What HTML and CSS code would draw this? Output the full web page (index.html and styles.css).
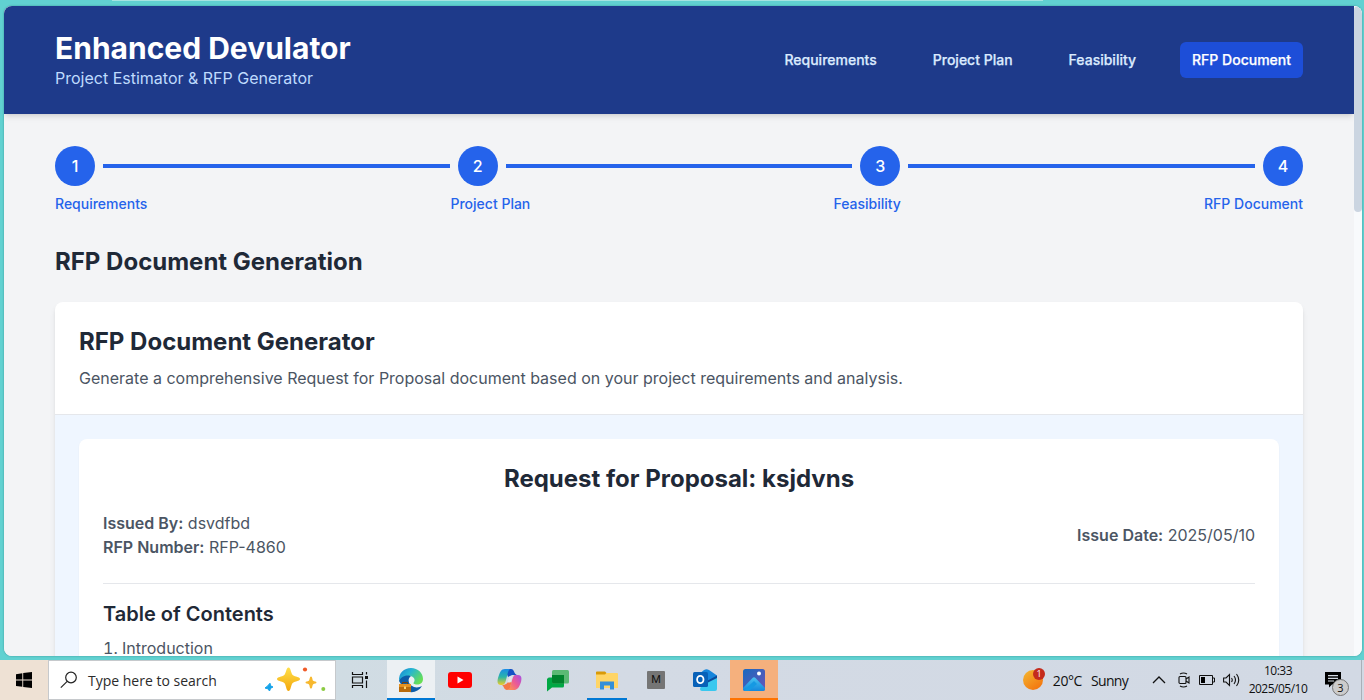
FILE: index.html
```html
<!DOCTYPE html>
<html lang="en">
<head>
<meta charset="utf-8">
<title>Enhanced Devulator</title>
<link rel="stylesheet" href="styles.css">
</head>
<body>
<div class="desktop">
  <div class="window">
    <div class="page">
      <header class="header">
        <div class="brand">
          <h1 class="brand-title">Enhanced Devulator</h1>
          <p class="brand-sub">Project Estimator &amp; RFP Generator</p>
        </div>
        <nav class="nav">
          <a class="nav-link">Requirements</a>
          <a class="nav-link">Project Plan</a>
          <a class="nav-link">Feasibility</a>
          <a class="nav-link active">RFP Document</a>
        </nav>
      </header>
      <main class="main">
        <div class="steps">
          <span class="step">1</span><span class="line"></span>
          <span class="step">2</span><span class="line"></span>
          <span class="step">3</span><span class="line"></span>
          <span class="step">4</span>
        </div>
        <div class="step-labels">
          <span>Requirements</span><span>Project Plan</span><span>Feasibility</span><span>RFP Document</span>
        </div>
        <h2 class="section-title">RFP Document Generation</h2>
        <section class="card">
          <div class="card-head">
            <h2 class="card-title">RFP Document Generator</h2>
            <p class="card-desc">Generate a comprehensive Request for Proposal document based on your project requirements and analysis.</p>
          </div>
          <div class="card-body">
            <article class="doc">
              <h2 class="doc-title">Request for Proposal: ksjdvns</h2>
              <div class="meta">
                <div>
                  <p><b>Issued By:</b> dsvdfbd</p>
                  <p><b>RFP Number:</b> RFP-4860</p>
                </div>
                <p><b>Issue Date:</b> 2025/05/10</p>
              </div>
              <h3 class="toc-title">Table of Contents</h3>
              <ol class="toc"><li>Introduction</li></ol>
            </article>
          </div>
        </section>
      </main>
    </div>
    <div class="scrollbar"><div class="thumb"></div></div>
  </div>

  <footer class="taskbar">
    <div class="start">
      <svg width="16" height="16" viewBox="0 0 16 16"><path d="M0 2.2 6.3 1.2V7.5H0ZM7.2 1.1 16 0V7.5H7.2ZM0 8.4H6.3V14.8L0 13.9ZM7.2 8.4H16V16L7.2 14.9Z"/></svg>
    </div>
    <div class="search">
      <svg width="18" height="18" viewBox="0 0 18 18" fill="none" stroke="#222" stroke-width="1.2"><circle cx="11" cy="6.5" r="5.3"/><path d="M7.2 10.4.8 16.6"/></svg>
      <span class="search-text">Type here to search</span>
      <svg class="sparkles" width="62" height="26" viewBox="0 0 62 26">
        <defs><linearGradient id="gold" x1="0" y1="0" x2="0" y2="1"><stop offset="0" stop-color="#ffe04a"/><stop offset="1" stop-color="#f3a70c"/></linearGradient></defs>
        <path fill="url(#gold)" d="M24.500 .5C27 .5 26.700 6.500 29 8.300C31 10 36 9.700 36 12C36 14.300 31 14 29 15.700C26.700 17.500 27 24 24.500 24C22 24 22.300 17.500 20 15.700C18 14 13 14.300 13 12C13 9.700 18 10 20 8.300C22.300 6.500 22 .5 24.500 .5Z"/>
        <path fill="#f7b82e" d="M47 9.500C48.500 9.500 48.200 13 49.200 13.800C50.200 14.600 52.500 14.300 52.500 15.500C52.500 16.700 50.200 16.400 49.200 17.200C48.200 18 48.500 21.500 47 21.500C45.500 21.500 45.800 18 44.800 17.200C43.800 16.400 41.500 16.700 41.500 15.500C41.500 14.300 43.800 14.600 44.800 13.800C45.800 13 45.500 9.500 47 9.500Z"/>
        <path fill="#15a3ea" stroke="#15a3ea" stroke-width="1" stroke-linejoin="round" d="M6 16.200 6.600 18.800 9 20 6.700 21.200 5.500 24 3.900 21.800 1 21 3.400 19.200Z"/>
        <circle cx="41" cy="2.500" r="2.100" fill="#f05a28"/><circle cx="59.300" cy="22" r="2" fill="#8ccb43"/>
      </svg>
    </div>
    <div class="apps">
      <div class="app task-view">
        <svg width="18" height="16" viewBox="0 0 18 16" fill="none" stroke="#111" stroke-width="1.200"><path d="M1.500 0V2.500H11.500V0M1.500 16V13.500H11.500V16M1.500 5H11.500V11H1.500ZM15.500 0V2.500M15.500 8.500V16"/><path fill="#111" stroke="none" d="M14 4H17V7H14Z"/></svg>
      </div>
      <div class="app open lit">
        <svg width="26" height="26" viewBox="0 0 26 26">
          <defs><linearGradient id="wave" x1="0" y1="0" x2="1" y2=".6"><stop offset="0" stop-color="#1681d0"/><stop offset=".45" stop-color="#26b5d2"/><stop offset="1" stop-color="#67df55"/></linearGradient></defs>
          <path fill="#0d5ca8" d="M1 14C2 8 9 6 13 9C9 12 10 18 16 20C19 21 22 20 24 19C20 26 11 27 6 22Z"/>
          <path fill="url(#wave)" d="M1 14C.500 6 6 1 13 1C20 1 25 6 25 12C25 17 20 18.500 16.500 17C14 16 17 15.500 16.500 12.500C15.500 8 5 6 1 14Z"/>
          <path fill="#b96b0c" d="M1 17H13V25H1Z"/><path fill="#e39223" d="M1 17H13V20H1Z"/><path fill="none" stroke="#74420c" d="M4.500 17V15.500H9.500V17"/><path fill="#ffd16a" d="M6 19.500H8V22H6Z"/>
        </svg>
      </div>
      <div class="app">
        <svg width="24" height="16" viewBox="0 0 24 16"><rect width="24" height="16" rx="3" fill="#f00"/><path fill="#fff" d="M9.500 4.500V11.500L15.500 8Z"/></svg>
      </div>
      <div class="app">
        <svg width="25" height="24" viewBox="0 0 25 24">
          <defs><linearGradient id="cpA" x1="0" y1="0" x2="0" y2="1"><stop offset="0" stop-color="#188be8"/><stop offset=".5" stop-color="#2bb5a7"/><stop offset="1" stop-color="#f1cd24"/></linearGradient><linearGradient id="cpB" x1="1" y1="0" x2="0" y2="1"><stop offset="0" stop-color="#a64ee6"/><stop offset=".5" stop-color="#ec5b94"/><stop offset="1" stop-color="#ff9a48"/></linearGradient></defs>
          <path fill="#1551c5" d="M8 1H14C17.500 1 17 6.500 20 7H15L11 9Z"/>
          <path fill="url(#cpA)" d="M8 1H13C11 2 10.500 7 9 12C8 16 7 17 4 17C.500 17 0 14 1 10C3 4 4 1 8 1Z"/>
          <path fill="url(#cpB)" d="M18 7H21C24.500 7 25 10 24 14C22 20 20 22 17 22H11C14 21 15 7 18 7Z"/>
          <path fill="#f47745" d="M5 17C9 17 10 15 11 14H14.500C13 20 13 22 10 22C7 22 7 18 5 17Z"/>
          <path fill="#e5e3ea" d="M12.500 8.500H15.300L13.500 14.500H10.500Z"/>
        </svg>
      </div>
      <div class="app">
        <svg width="22" height="23" viewBox="0 0 22 23"><path fill="#00a844" d="M1 9.500Q1 8.500 2 8.500H17V17Q17 18.500 15.500 18.500H5L0 22.500V9.500Z"/><rect x="5" y="1" width="17" height="13.500" rx="1.500" fill="#5bb974"/><path fill="#00832d" d="M5 6H17V14.500H6.500Q5 14.500 5 13Z"/></svg>
      </div>
      <div class="app open inset">
        <svg width="22" height="19" viewBox="0 0 22 19"><path fill="#d99a08" d="M0 1Q0 .500 1 .500H9L10.500 2V5H0Z"/><path fill="#ffd566" d="M0 3.500H9L10.500 2H21Q22 2 22 3V17H0Z"/><path fill="#338fd8" d="M4 10.500H18V18.500H14V14.500H8V18.500H4Z"/></svg>
      </div>
      <div class="app"><span class="m-tile">M</span></div>
      <div class="app">
        <svg width="25" height="24" viewBox="0 0 25 24">
          <path fill="#1685dc" d="M5 7 11 2Q13.500 .3 16 2L24 7.500V12L12 18Z"/><path fill="#0a4a9c" d="M12 14 24 7.500V11L13 19Z"/><path fill="#39c8ef" d="M8 18 24 10V21Q24 23 22 23H9Q7 23 7 21Z"/><rect y="4" width="15" height="15" rx="1.500" fill="#0861b8"/>
          <ellipse cx="7.300" cy="11.500" rx="3.200" ry="3.700" fill="none" stroke="#fff" stroke-width="1.800"/>
        </svg>
      </div>
      <div class="app photos">
        <svg width="22" height="22" viewBox="0 0 22 22">
          <defs><linearGradient id="sky" x1="0" y1="0" x2="1" y2="1"><stop offset="0" stop-color="#1769bf"/><stop offset="1" stop-color="#6c55b8"/></linearGradient><linearGradient id="hill" x1="0" y1="0" x2="0" y2="1"><stop offset="0" stop-color="#49c4f2"/><stop offset="1" stop-color="#1387dc"/></linearGradient></defs>
          <rect width="22" height="22" rx="2.500" fill="url(#sky)"/><path fill="url(#hill)" d="M0 19 9.500 9Q11 7.500 12.500 9L22 19V20Q22 22 20 22H2Q0 22 0 20Z"/><path fill="#1599e3" d="M1 21.500 11 12 14 15 6 22H2Z"/><circle cx="16" cy="4.500" r="2" fill="#fff"/>
        </svg>
      </div>
    </div>
    <div class="tray">
      <div class="weather">
        <span class="sun"><span class="alert">1</span></span>
        <span class="temp">20°C</span><span class="sky">Sunny</span>
      </div>
      <div class="status">
        <svg width="14" height="8" viewBox="0 0 14 8" fill="none" stroke="#111" stroke-width="1.300"><path d="M1 7 7 1 13 7"/></svg>
        <svg width="12" height="16" viewBox="0 0 12 16" fill="none" stroke="#111" stroke-width="1.100"><path d="M2 2Q5.500 0 9 2M2 14Q5.500 16 9 14"/><rect x="1" y="4.500" width="7" height="7" rx="1"/><path d="M8 7 11 5V11L8 9"/></svg>
        <svg width="16" height="10" viewBox="0 0 16 10"><path fill="none" stroke="#111" d="M.500.500H13.500V9.500H.500ZM14 3H15.500V7H14"/><path d="M2 2H6V8H2Z"/></svg>
        <svg width="17" height="14" viewBox="0 0 17 14" fill="none" stroke="#111" stroke-width="1.100"><path d="M.600 5H3L6.500 1.500V12.500L3 9H.600ZM8.500 5Q10 7 8.500 9M11 3Q14 7 11 11M13.500 1Q18 7 13.500 13"/></svg>
      </div>
      <div class="clock"><span>10:33</span><span>2025/05/10</span></div>
      <div class="notes">
        <svg width="16" height="16" viewBox="0 0 16 16"><path d="M0 0H16V12.500H7L4 15.500V12.500H0Z"/><path stroke="#d2d9e2" stroke-width="1.200" d="M3 3.600H13M3 6.300H13M3 9H9"/></svg>
        <span class="count">3</span>
      </div>
    </div>
    <div class="peek"></div>
  </footer>
</div>
</body>
</html>
```

FILE: styles.css
```css
* { box-sizing: border-box; }
body { margin: 0; font-family: Inter, "Liberation Sans", sans-serif; }
h1, h2, h3, p { margin: 0; }
svg { display: block; flex: none; }

.desktop {
  width: 1364px; height: 700px; overflow: hidden;
  display: flex; flex-direction: column;
  padding-top: 6px;
  background: linear-gradient(#a5e4e1, #a5e4e1) 112px 0 / 931px 1px no-repeat, #61d1d1;
}
.window {
  display: flex; flex: none;
  height: 650px; margin: 0 2px 4px 4px;
  overflow: hidden;
  border-radius: 8px;
  background: #f8fafc;
  box-shadow: 0 0 2px rgba(0, 70, 70, .45);
}
.page { flex: 1; background: #f3f4f6; overflow: hidden; }
.scrollbar { width: 8px; flex: none; background: #f8fafc; }
.thumb { height: 206px; border-radius: 4px; background: #cbd5e1; }

.header {
  display: flex; justify-content: space-between; align-items: center;
  height: 108px; padding: 0 51px;
  background: #1e3a8a; color: #fff;
  box-shadow: 0 4px 6px -1px rgba(0, 0, 0, .1), 0 2px 4px -2px rgba(0, 0, 0, .1);
}
.brand-title { font-size: 30px; line-height: 36px; font-weight: 700; }
.brand-sub { font-size: 16px; line-height: 24px; color: #bfdbfe; }
.nav { display: flex; gap: 32px; }
.nav-link { padding: 8px 12px; border-radius: 6px; font-size: 14px; line-height: 20px; font-weight: 500; -webkit-text-stroke: .25px currentColor; color: #dbeafe; }
.nav-link.active { background: #1d4ed8; color: #fff; }

.main { padding: 32px 51px; }
.steps { display: flex; align-items: center; }
.step {
  display: flex; align-items: center; justify-content: center; flex: none;
  width: 40px; height: 40px; border-radius: 50%;
  background: #2563eb; color: #fff; font-size: 16px; font-weight: 500;
}
.line { flex: 1; height: 4px; margin: 0 8px; background: #2563eb; }
.step-labels {
  display: flex; justify-content: space-between; margin-top: 8px;
  font-size: 14px; line-height: 20px; font-weight: 500; color: #2563eb;
}
.section-title { margin: 32px 0 24px; font-size: 24px; line-height: 32px; font-weight: 700; color: #1f2937; }

.card { border-radius: 8px; background: #fff; overflow: hidden; box-shadow: 0 4px 6px -1px rgba(0, 0, 0, .1), 0 2px 4px -2px rgba(0, 0, 0, .1); }
.card-head { padding: 24px; border-bottom: 1px solid #e5e7eb; }
.card-title { font-size: 24px; line-height: 32px; font-weight: 700; color: #1f2937; }
.card-desc { margin-top: 8px; font-size: 16px; line-height: 24px; color: #4b5563; }
.card-body { padding: 24px; background: #eff6ff; }
.doc { padding: 24px; border-radius: 8px; background: #fff; color: #4b5563; font-size: 16px; line-height: 24px; box-shadow: 0 1px 2px rgba(0, 0, 0, .05); }
.doc-title { text-align: center; font-size: 24px; line-height: 32px; font-weight: 700; color: #1f2937; }
.meta {
  display: flex; justify-content: space-between; align-items: center;
  margin: 16px 0; padding-bottom: 24px; border-bottom: 1px solid #e5e7eb;
}
.meta b { font-weight: 600; }
.toc-title { font-size: 20px; line-height: 28px; font-weight: 600; color: #1f2937; }
.toc { margin: 8px 0 0; padding-left: 19px; list-style: decimal; }

.taskbar {
  display: flex; flex: none; height: 40px;
  background: linear-gradient(90deg, #eee1d4 0, #eee1d4 48px, #d0dce3 336px, #d3dae4 600px, #d2d9e4 100%);
  font-family: "Open Sans", "Noto Sans", sans-serif; color: #111;
}
.start { display: flex; width: 48px; align-items: center; justify-content: center; }
.search {
  display: flex; align-items: center; width: 288px; padding: 0 9px 0 11px;
  background: #fff; border: 1px solid #c6c9cc;
}
.search-text { margin-left: 10px; font-size: 14px; color: #2b2b2b; }
.sparkles { margin-left: auto; }
.apps { display: flex; gap: 1px; }
.app { display: flex; width: 48px; align-items: center; justify-content: center; }
.task-view { margin-right: 2px; }
.open { border-bottom: 2px solid #0078d4; padding-top: 2px; }
.lit { background: #ecf0f3; }
.inset { width: 40px; margin: 0 4px; }
.photos { background: #f5b07d; border-bottom: 2px solid #ff7300; padding-top: 2px; }
.m-tile { width: 18px; height: 18px; border-radius: 1px; background: #757575; text-align: center; font: 11px/18px Roboto, sans-serif; color: #111; }

.tray { display: flex; align-items: center; margin-left: auto; padding-right: 12px; }
.weather { display: flex; align-items: center; font-size: 14px; letter-spacing: -.4px; }
.sun { position: relative; width: 20px; height: 20px; margin-right: 10px; border-radius: 50%; background: linear-gradient(145deg, #f4b932, #f36c0a); }
.alert {
  position: absolute; right: -2px; top: -2px; width: 12px; height: 12px; border-radius: 50%;
  background: #c42b1c; color: #fff; font-size: 9px; line-height: 12px; text-align: center;
}
.temp { margin-right: 9px; }
.sky { letter-spacing: -.7px; }
.status { display: flex; align-items: center; gap: 8px; margin-left: 27px; }
.status svg:first-child { margin-right: 5px; margin-left: -3px; }
.status svg:nth-child(2) { margin-left: -1px; margin-right: 1px; }
.clock { display: flex; flex-direction: column; width: 60px; margin-left: 8px; align-items: center; font-size: 12px; line-height: 18px; letter-spacing: -.5px; }
.notes { position: relative; width: 24px; height: 16px; margin-left: 17px; }
.count {
  position: absolute; left: 7px; top: 7px; width: 17px; height: 17px; border: 1px solid #777; border-radius: 50%;
  background: #ccc; font-size: 11px; line-height: 15px; text-align: center;
}
.peek { width: 3px; border-left: 1px solid #a9b0b8; }
```
